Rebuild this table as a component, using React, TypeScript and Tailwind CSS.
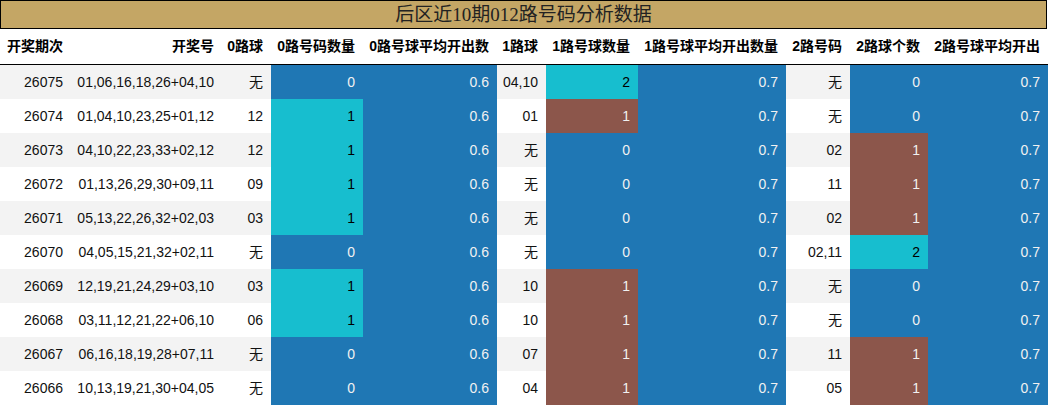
import React from "react";

type Row = [string, string, string, number, string, string, number, string, string, number, string];

const rows: Row[] = [
  ["26075", "01,06,16,18,26+04,10", "无", 0, "0.6", "04,10", 2, "0.7", "无", 0, "0.7"],
  ["26074", "01,04,10,23,25+01,12", "12", 1, "0.6", "01", 1, "0.7", "无", 0, "0.7"],
  ["26073", "04,10,22,23,33+02,12", "12", 1, "0.6", "无", 0, "0.7", "02", 1, "0.7"],
  ["26072", "01,13,26,29,30+09,11", "09", 1, "0.6", "无", 0, "0.7", "11", 1, "0.7"],
  ["26071", "05,13,22,26,32+02,03", "03", 1, "0.6", "无", 0, "0.7", "02", 1, "0.7"],
  ["26070", "04,05,15,21,32+02,11", "无", 0, "0.6", "无", 0, "0.7", "02,11", 2, "0.7"],
  ["26069", "12,19,21,24,29+03,10", "03", 1, "0.6", "10", 1, "0.7", "无", 0, "0.7"],
  ["26068", "03,11,12,21,22+06,10", "06", 1, "0.6", "10", 1, "0.7", "无", 0, "0.7"],
  ["26067", "06,16,18,19,28+07,11", "无", 0, "0.6", "07", 1, "0.7", "11", 1, "0.7"],
  ["26066", "10,13,19,21,30+04,05", "无", 0, "0.6", "04", 1, "0.7", "05", 1, "0.7"],
];

const headers = [
  "开奖期次",
  "开奖号",
  "0路球",
  "0路号码数量",
  "0路号球平均开出数",
  "1路球",
  "1路号球数量",
  "1路号球平均开出数量",
  "2路号码",
  "2路球个数",
  "2路号球平均开出",
];

const BLUE = "bg-[#1f77b4] text-[#f1f1f1]";
const CYAN = "bg-[#17becf] text-[#000000]";
const BROWN = "bg-[#8c564b] text-[#f1f1f1]";

function countCls(v: number, max: number, min: number) {
  if (v === max) return CYAN;
  if (v === min) return BLUE;
  return BROWN;
}

export default function App() {
  const grid =
    "grid grid-cols-[71px_151px_49px_92px_134px_49px_92px_148px_64px_78px_120px]";
  return (
    <div
      className="w-[1048px] h-[406px] bg-white overflow-hidden"
      style={{ fontFamily: '"Liberation Sans", "Noto Sans CJK SC", sans-serif' }}
    >
      <div
        className="w-[1047px] h-[29px] border border-black bg-[#c4a665] flex items-center justify-center text-[19px] text-[#222] leading-none"
        style={{ fontFamily: '"Liberation Serif", "Noto Sans CJK SC", serif' }}
      >
        后区近10期012路号码分析数据
      </div>
      <div className={`${grid} h-[36px] border-b border-black items-center`}>
        {headers.map((h) => (
          <div key={h} className="text-right pr-2 text-[14px] font-bold text-black whitespace-nowrap">
            {h}
          </div>
        ))}
      </div>
      {rows.map((r, i) => {
        const bg = i % 2 === 0 ? "bg-[#f3f3f3]" : "bg-white";
        const plain = `${bg} text-[#111]`;
        const cells: [string, string][] = [
          [r[0], plain],
          [r[1], plain],
          [r[2], plain],
          [String(r[3]), countCls(r[3], 1, 0)],
          [r[4], BLUE],
          [r[5], plain],
          [String(r[6]), countCls(r[6], 2, 0)],
          [r[7], BLUE],
          [r[8], plain],
          [String(r[9]), countCls(r[9], 2, 0)],
          [r[10], BLUE],
        ];
        return (
          <div key={r[0]} className={`${grid} h-[34px]`}>
            {cells.map(([t, c], j) => (
              <div
                key={j}
                className={`${c} flex items-center justify-end pr-2 text-[14px] whitespace-nowrap`}
              >
                {t}
              </div>
            ))}
          </div>
        );
      })}
    </div>
  );
}
